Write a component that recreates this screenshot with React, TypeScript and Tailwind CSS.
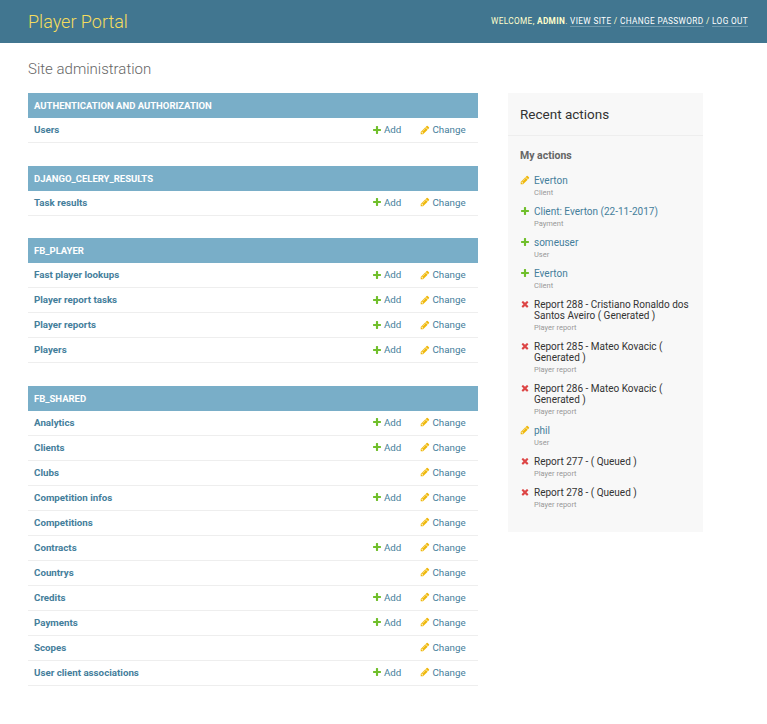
import React from 'react';

type Kind = 'add' | 'change' | 'delete';

const iconPaths: { [key in Kind]: { fill: string; d: string } } = {
    add: {
        fill: '#70bf2b',
        d: 'M1600 796v192q0 40-28 68t-68 28h-416v416q0 40-28 68t-68 28h-192q-40 0-68-28t-28-68v-416h-416q-40 0-68-28t-28-68v-192q0-40 28-68t68-28h416v-416q0-40 28-68t68-28h192q40 0 68 28t28 68v416h416q40 0 68 28t28 68z',
    },
    change: {
        fill: '#efb80b',
        d: 'M491 1536l91-91-235-235-91 91v107h128v128h107zm523-928q0-22-22-22-10 0-17 7l-542 542q-7 7-7 17 0 22 22 22 10 0 17-7l542-542q7-7 7-17zm-54-192l416 416-832 832h-416v-416zm683 96q0 53-37 90l-166 166-416-416 166-165q36-38 90-38 53 0 91 38l235 234q37 39 37 91z',
    },
    delete: {
        fill: '#dd4646',
        d: 'M1490 1322q0 40-28 68l-136 136q-28 28-68 28t-68-28l-294-294-294 294q-28 28-68 28t-68-28l-136-136q-28-28-28-68t28-68l294-294-294-294q-28-28-28-68t28-68l136-136q28-28 68-28t68 28l294 294 294-294q28-28 68-28t68 28l136 136q28 28 28 68t-28 68l-294 294 294 294q28 28 28 68z',
    },
};

const Icon = ({ kind, className = '' }: { kind: Kind; className?: string }) => (
    <svg viewBox="0 0 1792 1792" className={`w-[10px] h-[10px] shrink-0 ${className}`}>
        <path fill={iconPaths[kind].fill} d={iconPaths[kind].d} />
    </svg>
);

interface Group {
    name: string;
    rows: [string, boolean][];
}

const groups: Group[] = [
    { name: 'Authentication and Authorization', rows: [['Users', true]] },
    { name: 'django_celery_results', rows: [['Task results', true]] },
    {
        name: 'fb_player',
        rows: [
            ['Fast player lookups', true],
            ['Player report tasks', true],
            ['Player reports', true],
            ['Players', true],
        ],
    },
    {
        name: 'fb_shared',
        rows: [
            ['Analytics', true],
            ['Clients', true],
            ['Clubs', false],
            ['Competition infos', true],
            ['Competitions', false],
            ['Contracts', true],
            ['Countrys', false],
            ['Credits', true],
            ['Payments', true],
            ['Scopes', false],
            ['User client associations', true],
        ],
    },
];

const actions: { kind: Kind; title: string; type: string; dark?: boolean }[] = [
    { kind: 'change', title: 'Everton', type: 'Client' },
    { kind: 'add', title: 'Client: Everton (22-11-2017)', type: 'Payment' },
    { kind: 'add', title: 'someuser', type: 'User' },
    { kind: 'add', title: 'Everton', type: 'Client' },
    { kind: 'delete', title: 'Report 288 - Cristiano Ronaldo dos Santos Aveiro ( Generated )', type: 'Player report', dark: true },
    { kind: 'delete', title: 'Report 285 - Mateo Kovacic ( Generated )', type: 'Player report', dark: true },
    { kind: 'delete', title: 'Report 286 - Mateo Kovacic ( Generated )', type: 'Player report', dark: true },
    { kind: 'change', title: 'phil', type: 'User' },
    { kind: 'delete', title: 'Report 277 - ( Queued )', type: 'Player report', dark: true },
    { kind: 'delete', title: 'Report 278 - ( Queued )', type: 'Player report', dark: true },
];

const App: React.FC = () => {
    return (
        <div className="min-h-[724px] bg-white font-['Roboto',sans-serif] text-[#333]">
            <header className="h-[43px] bg-[#417690] flex items-center justify-between pl-[28px] pr-[19px]">
                <h1 className="text-[18px] font-light text-[#f5dd5d] leading-none">Player Portal</h1>
                <div className="text-[8.25px] uppercase tracking-[0.35px] text-[#ffc] leading-none">
                    Welcome, <strong className="font-bold">admin</strong>.{' '}
                    <a className="text-white border-b border-white/25">View site</a> /{' '}
                    <a className="text-white border-b border-white/25">Change password</a> /{' '}
                    <a className="text-white border-b border-white/25">Log out</a>
                </div>
            </header>

            <main className="px-[28px] pt-[17px] flex items-start">
                <div className="w-[450px] shrink-0">
                    <h2 className="text-[15px] font-light text-[#666] leading-[18px] mb-[15.25px]">Site administration</h2>
                    {groups.map((group) => (
                        <section key={group.name} className="mb-[22.5px]">
                            <div className="h-[25px] pt-[1px] bg-[#79aec8] flex items-center px-[6px] text-[9.5px] font-bold uppercase text-white">
                                {group.name}
                            </div>
                            {group.rows.map(([name, canAdd]) => (
                                <div key={name} className="h-[25px] pt-[1px] border-b border-[#eee] flex items-center text-[9.75px] text-[#447e9b]">
                                    <span className="flex-1 pl-[6px] font-bold">{name}</span>
                                    <span className="w-[48.5px] flex items-center gap-[2.5px]">
                                        {canAdd && (
                                            <>
                                                <Icon kind="add" className="mb-[2px]" />
                                                Add
                                            </>
                                        )}
                                    </span>
                                    <span className="w-[58px] flex items-center gap-[2.5px]">
                                        <Icon kind="change" className="mb-[2px]" />
                                        Change
                                    </span>
                                </div>
                            ))}
                        </section>
                    ))}
                </div>

                <aside className="ml-[30px] mt-[33px] w-[195px] h-[439px] shrink-0 bg-[#f8f8f8]">
                    <h2 className="h-[43px] border-b border-[#eee] px-[12px] flex items-center text-[13.5px] text-[#333]">Recent actions</h2>
                    <div className="px-[12px] pt-[14px]">
                        <h3 className="text-[10.5px] font-bold text-[#666] leading-[12px] mb-[13px]">My actions</h3>
                        <ul>
                            {actions.map((action, index) => (
                                <li key={index} className="flex mb-[8px]">
                                    <div className="w-[14px] shrink-0">
                                        <Icon kind={action.kind} />
                                    </div>
                                    <div className="flex-1 min-w-0">
                                        <div className={`text-[10px] leading-[11px] ${action.dark ? 'text-[#333]' : 'text-[#447e9b]'}`}>
                                            {action.title}
                                        </div>
                                        <div className="text-[7.5px] leading-[10px] mt-[2px] text-[#999]">{action.type}</div>
                                    </div>
                                </li>
                            ))}
                        </ul>
                    </div>
                </aside>
            </main>
        </div>
    );
};

export default App;
